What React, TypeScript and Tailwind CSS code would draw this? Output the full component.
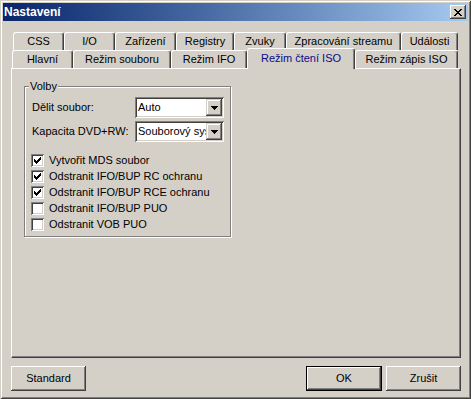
import React from "react";

function CloseGlyph() {
  const rows: [number, number, number][] = [
    [0, 0, 2], [6, 0, 2],
    [1, 1, 2], [5, 1, 2],
    [2, 2, 4],
    [3, 3, 2],
    [2, 4, 4],
    [1, 5, 2], [5, 5, 2],
    [0, 6, 2], [6, 6, 2],
  ];
  return (
    <svg width="8" height="7" viewBox="0 0 8 7" shapeRendering="crispEdges">
      {rows.map(([x, y, w], i) => (
        <rect key={i} x={x} y={y} width={w} height={1} fill="#000" />
      ))}
    </svg>
  );
}

function CheckGlyph() {
  const rows: [number, number, number][] = [
    [6, 0, 1],
    [5, 1, 2],
    [0, 2, 1], [4, 2, 3],
    [0, 3, 2], [3, 3, 3],
    [0, 4, 5],
    [1, 5, 3],
    [2, 6, 1],
  ];
  return (
    <svg width="7" height="7" viewBox="0 0 7 7" shapeRendering="crispEdges">
      {rows.map(([x, y, w], i) => (
        <rect key={i} x={x} y={y} width={w} height={1} fill="#000" />
      ))}
    </svg>
  );
}

function ArrowGlyph() {
  return (
    <svg width="7" height="4" viewBox="0 0 7 4" shapeRendering="crispEdges">
      <rect x="0" y="0" width="7" height="1" fill="#000" />
      <rect x="1" y="1" width="5" height="1" fill="#000" />
      <rect x="2" y="2" width="3" height="1" fill="#000" />
      <rect x="3" y="3" width="1" height="1" fill="#000" />
    </svg>
  );
}

function Tab({ label, w }: { label: string; w: string }) {
  return (
    <div
      className={`${w} h-[18px] shrink-0 flex items-center justify-center whitespace-nowrap bg-[#d4d0c8] border-t border-l border-r border-white border-r-[#404040] rounded-t-[3px] shadow-[inset_-1px_0_#808080]`}
    >
      {label}
    </div>
  );
}

function Combo({ value }: { value: string }) {
  return (
    <div className="w-[89px] h-[21px] p-[2px] flex bg-white shadow-[inset_1px_1px_#808080,inset_-1px_-1px_#ffffff,inset_2px_2px_#404040,inset_-2px_-2px_#d4d0c8]">
      <div className="flex-1 min-w-0 pl-[1px] flex items-center overflow-hidden whitespace-nowrap">
        {value}
      </div>
      <div className="w-[16px] h-[17px] shrink-0 flex items-center justify-center bg-[#d4d0c8] shadow-[inset_-1px_-1px_#404040,inset_1px_1px_#d4d0c8,inset_-2px_-2px_#808080,inset_2px_2px_#ffffff]">
        <ArrowGlyph />
      </div>
    </div>
  );
}

function Check({ label, checked }: { label: string; checked: boolean }) {
  return (
    <div className="h-[13px] flex items-center">
      <div className="w-[13px] h-[13px] shrink-0 flex items-center justify-center bg-white shadow-[inset_1px_1px_#808080,inset_-1px_-1px_#ffffff,inset_2px_2px_#404040,inset_-2px_-2px_#d4d0c8]">
        {checked && <CheckGlyph />}
      </div>
      <span className="ml-[5px] whitespace-nowrap">{label}</span>
    </div>
  );
}

function Button({ label, isDefault }: { label: string; isDefault?: boolean }) {
  if (isDefault) {
    return (
      <div className="w-[76px] h-[25px] border border-black">
        <div className="w-full h-full flex items-center justify-center shadow-[inset_-1px_-1px_#404040,inset_1px_1px_#ffffff,inset_-2px_-2px_#808080,inset_2px_2px_#d4d0c8]">
          {label}
        </div>
      </div>
    );
  }
  return (
    <div className="w-[75px] h-[25px] flex items-center justify-center shadow-[inset_-1px_-1px_#404040,inset_1px_1px_#ffffff,inset_-2px_-2px_#808080,inset_2px_2px_#d4d0c8]">
      {label}
    </div>
  );
}

export default function App() {
  return (
    <div className="w-[471px] h-[399px] overflow-hidden bg-[#d4d0c8] p-[3px] flex flex-col text-[11px] leading-[13px] text-black font-['Liberation_Sans',Arial,sans-serif] shadow-[inset_1px_1px_#d4d0c8,inset_-1px_-1px_#404040,inset_2px_2px_#ffffff,inset_-2px_-2px_#808080]">
      {/* Title bar */}
      <div className="h-[18px] shrink-0 flex items-center justify-between pl-[1px] pr-[2px] bg-linear-to-r from-[#0a246a] to-[#a6caf0]">
        <span className="text-white font-bold text-[12px] leading-[14px]">Nastavení</span>
        <div className="w-[16px] h-[14px] flex items-center justify-center bg-[#d4d0c8] shadow-[inset_-1px_-1px_#404040,inset_1px_1px_#ffffff,inset_-2px_-2px_#808080,inset_2px_2px_#d4d0c8]">
          <CloseGlyph />
        </div>
      </div>

      {/* Client */}
      <div className="pl-[8px] pt-[11px] flex flex-col">
        {/* Tab row 1 */}
        <div className="flex pl-[2px]">
          <Tab label="CSS" w="w-[51px]" />
          <Tab label="I/O" w="w-[51px]" />
          <Tab label="Zařízení" w="w-[61px]" />
          <Tab label="Registry" w="w-[58px]" />
          <Tab label="Zvuky" w="w-[52px]" />
          <Tab label="Zpracování streamu" w="w-[115px]" />
          <Tab label="Události" w="w-[57px]" />
        </div>
        {/* Tab row 2 */}
        <div className="flex items-end h-[18px] pl-[1px]">
          <Tab label="Hlavní" w="w-[61px]" />
          <Tab label="Režim souboru" w="w-[98px]" />
          <Tab label="Režim IFO" w="w-[76px]" />
          <div className="relative z-10 w-[108px] h-[21px] mb-[-1px] shrink-0 flex items-center justify-center pb-[2px] whitespace-nowrap text-[#0a0a8a] bg-[#d4d0c8] border-t border-l border-r border-white border-r-[#404040] rounded-t-[3px] shadow-[inset_-1px_0_#808080]">
            Režim čtení ISO
          </div>
          <Tab label="Režim zápis ISO" w="w-[103px]" />
        </div>

        {/* Panel */}
        <div className="w-[450px] h-[290px] shrink-0 pl-[12px] pt-[17px] border-t border-l border-white border-r border-b border-r-[#404040] border-b-[#404040] shadow-[inset_-1px_-1px_#808080]">
          <div className="relative w-[207px] h-[151px] border border-[#808080] shadow-[inset_1px_1px_#ffffff,1px_1px_#ffffff]">
            <span className="absolute left-[4px] top-[-7px] px-[1px] bg-[#d4d0c8]">Volby</span>
            <div className="pl-[7px] pt-[10px] flex flex-col">
              <div className="h-[21px] flex items-center">
                <span className="w-[103px] shrink-0">Dělit soubor:</span>
                <Combo value="Auto" />
              </div>
              <div className="h-[21px] mt-[3px] flex items-center">
                <span className="w-[103px] shrink-0">Kapacita DVD+RW:</span>
                <Combo value="Souborový systém" />
              </div>
              <div className="mt-[12px] -ml-[1px] flex flex-col gap-[3px]">
                <Check label="Vytvořit MDS soubor" checked />
                <Check label="Odstranit IFO/BUP RC ochranu" checked />
                <Check label="Odstranit IFO/BUP RCE ochranu" checked />
                <Check label="Odstranit IFO/BUP PUO" checked={false} />
                <Check label="Odstranit VOB PUO" checked={false} />
              </div>
            </div>
          </div>
        </div>

        {/* Buttons */}
        <div className="w-[450px] mt-[8px] flex">
          <Button label="Standard" />
          <div className="flex-1" />
          <Button label="OK" isDefault />
          <div className="ml-[4px]">
            <Button label="Zrušit" />
          </div>
        </div>
      </div>
    </div>
  );
}
